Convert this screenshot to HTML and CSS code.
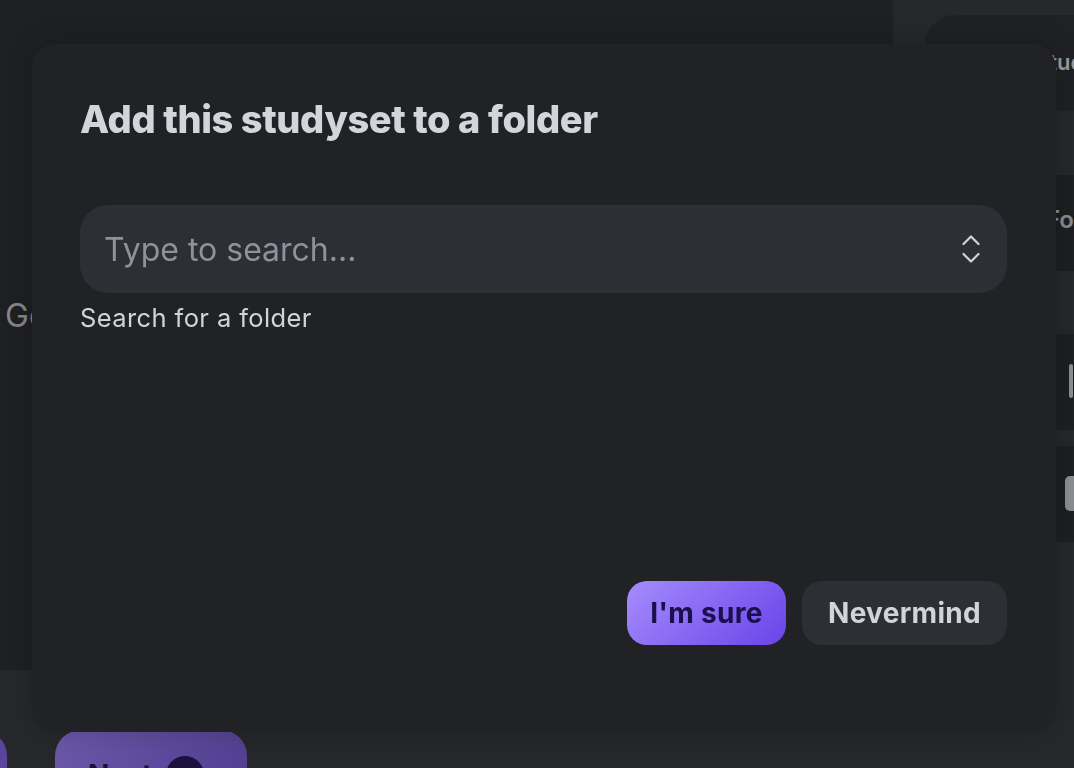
FILE: index.html
```html
<!DOCTYPE html>
<html lang="en">
<head>
<meta charset="utf-8">
<title>Add this studyset to a folder</title>
<link rel="stylesheet" href="styles.css">
</head>
<body>
<div class="page">
  <div class="main">
    <div class="main-top">
      <div class="go-label">Go</div>
    </div>
    <div class="main-footer">
      <button class="pbtn pbtn-back">Back</button>
      <button class="pbtn pbtn-next">Next <span class="pbtn-circle"></span></button>
    </div>
  </div>
  <aside class="rail">
    <div class="rail-card"><span class="rail-title">Studyset</span></div>
    <div class="rail-gap"></div>
    <div class="rail-row"><span class="rail-row-text">Folder</span></div>
    <div class="rail-gap rail-gap-lg"></div>
    <div class="rail-item"><span class="rail-bar"></span></div>
    <div class="rail-gap rail-gap-sm"></div>
    <div class="rail-item"><span class="rail-box"></span></div>
  </aside>
</div>

<div class="overlay">
  <div class="modal" role="dialog" aria-labelledby="modal-title">
    <h2 class="modal-title" id="modal-title">Add this studyset to a folder</h2>
    <div class="field">
      <div class="combo">
        <input class="combo-input" type="text" placeholder="Type to search...">
        <svg class="combo-icon" width="18" height="28" viewBox="0 0 18 28" aria-hidden="true">
          <polyline points="1.5,9 9,1.5 16.5,9" />
          <polyline points="1.5,19 9,26.5 16.5,19" />
        </svg>
      </div>
      <div class="field-label">Search for a folder</div>
    </div>
    <div class="modal-actions">
      <button class="btn btn-primary">I'm sure</button>
      <button class="btn btn-secondary">Nevermind</button>
    </div>
  </div>
</div>
</body>
</html>
```

FILE: styles.css
```css
* { box-sizing: border-box; }

html, body {
  margin: 0;
  padding: 0;
  height: 100%;
  overflow: hidden;
}

body {
  background: #27282c;
  font-family: Inter, "Noto Sans", sans-serif;
  color: #d2d3d8;
}

.page {
  display: flex;
  height: 768px;
  overflow: hidden;
}

.main {
  flex: 1;
  display: flex;
  flex-direction: column;
  min-width: 0;
}

.main-top {
  flex: none;
  height: 670px;
  background: #1f2023;
  padding: 296px 0 0 5px;
}

.go-label {
  font-size: 32px;
  color: #85868b;
  white-space: nowrap;
}

.main-footer {
  flex: none;
  height: 98px;
  display: flex;
  align-items: flex-start;
  gap: 48px;
  padding-top: 60px;
}

.pbtn {
  flex: none;
  height: 90px;
  border: 0;
  border-radius: 26px;
  font-family: inherit;
  font-weight: 700;
  font-size: 28px;
  color: #1a1038;
  display: flex;
  align-items: center;
  gap: 14px;
  padding: 0 36px 0 33px;
  background: linear-gradient(135deg, #6d5aaa, #4d398e);
}

.pbtn-back {
  width: 120px;
  margin-left: -113px;
  background: #5a44a0;
}

.pbtn-next {
  width: 192px;
}

.pbtn-circle {
  width: 38px;
  height: 38px;
  border-radius: 50%;
  background: #1c1240;
  flex: none;
}

.rail {
  width: 181px;
  flex: none;
  background: #27282c;
  padding: 15px 0 0 32px;
  display: flex;
  flex-direction: column;
}

.rail-card {
  height: 96px;
  background: #202125;
  border-radius: 30px 0 0 0;
  padding: 34px 0 0 110px;
}

.rail-title {
  font-size: 22px;
  font-weight: 600;
  color: #9a9ba0;
  white-space: nowrap;
  display: block;
  overflow: hidden;
}

.rail-gap { height: 64px; flex: none; }
.rail-gap-lg { height: 63px; }
.rail-gap-sm { height: 16px; }

.rail-row {
  flex: none;
  height: 96px;
  background: #1e1f22;
  padding: 30px 0 0 121px;
  overflow: hidden;
}

.rail-row-text {
  font-size: 24px;
  font-weight: 600;
  color: #8b8c91;
  white-space: nowrap;
}

.rail-item {
  flex: none;
  height: 96px;
  background: #1e1f22;
  border-radius: 28px 0 0 28px;
  padding: 30px 0 0 144px;
}

.rail-bar {
  display: block;
  width: 4px;
  height: 34px;
  border-radius: 2px;
  background: #8e8f94;
}

.rail-box {
  display: block;
  width: 14px;
  height: 35px;
  border-radius: 5px;
  background: #8e8f94;
  margin-left: -4px;
}

/* overlay + modal */
.overlay {
  position: fixed;
  inset: 0;
  display: flex;
  align-items: flex-start;
  justify-content: flex-start;
  padding: 44px 0 0 32px;
}

.modal {
  flex: none;
  width: 1024px;
  height: 688px;
  background: #212226;
  border-radius: 24px;
  padding: 55px 49px 87px 48px;
  display: flex;
  flex-direction: column;
  box-shadow: 0 0 30px rgba(0, 0, 0, 0.22);
}

.modal-title {
  margin: 0;
  font-size: 38px;
  line-height: 40px;
  font-weight: 800;
  letter-spacing: -0.4px;
  color: #d4d5db;
  white-space: nowrap;
}

.field {
  margin-top: 66px;
  display: flex;
  flex-direction: column;
}

.combo {
  height: 88px;
  border-radius: 28px;
  background: #2e2f34;
  display: flex;
  align-items: center;
  padding: 0 27px 0 24px;
}

.combo-input {
  flex: 1;
  min-width: 0;
  background: transparent;
  border: 0;
  outline: none;
  font-family: inherit;
  font-size: 32px;
  color: #d4d5db;
  padding: 0;
}

.combo-input::placeholder {
  color: #8f919c;
}

.combo-icon {
  flex: none;
  fill: none;
  stroke: #d2d3d8;
  stroke-width: 2.2;
  stroke-linecap: round;
  stroke-linejoin: round;
}

.field-label {
  margin-top: 10px;
  font-size: 25.5px;
  line-height: 30px;
  letter-spacing: 0.4px;
  color: #d2d3d8;
}

.modal-actions {
  margin-top: auto;
  display: flex;
  justify-content: flex-end;
  gap: 16px;
}

.btn {
  height: 64px;
  border: 0;
  border-radius: 20px;
  font-family: inherit;
  font-size: 28px;
  font-weight: 700;
  letter-spacing: 0.3px;
  padding: 0;
  cursor: pointer;
}

.btn-primary {
  width: 159px;
  background: linear-gradient(135deg, #a58cfb, #6a43ea);
  color: #1b0f4d;
}

.btn-secondary {
  width: 205px;
  background: #2e2f34;
  color: #d3d4da;
}
```
